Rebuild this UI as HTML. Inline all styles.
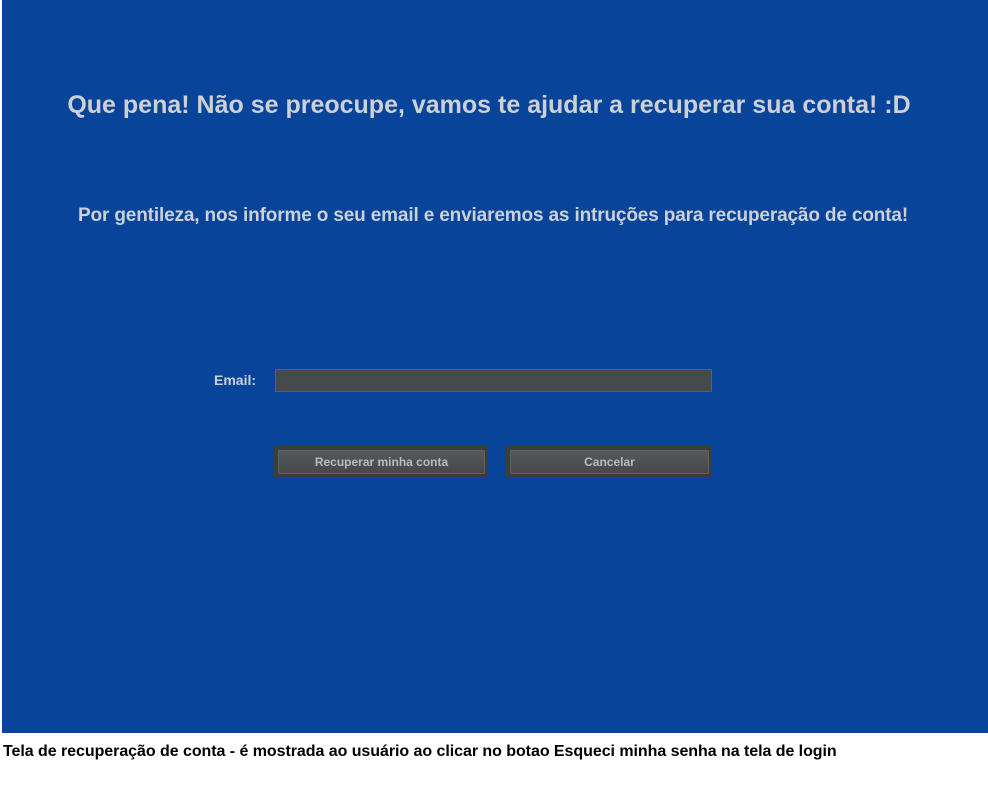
<!DOCTYPE html>
<html><head><meta charset="utf-8">
<style>
html,body{margin:0;padding:0;background:#fff;width:988px;height:794px;overflow:hidden;font-family:"Liberation Sans",sans-serif}
.panel{position:absolute;left:2px;top:0;width:986px;height:733px;background:#07449a}
.t{position:absolute;left:0;width:988px;text-align:center;color:#cdd0d6;font-weight:bold;white-space:nowrap}
#h1{left:-5px;top:91px;font-size:25px;letter-spacing:0px}
#h2{left:-1px;top:205px;font-size:19px;letter-spacing:-0.15px}
#lbl{position:absolute;left:214px;top:372px;color:#cdd0d6;font-weight:bold;font-size:14px}
#inp{position:absolute;left:275px;top:369px;width:435px;height:21px;background:#474a4c;border:1px solid #5a6066}
.btn{position:absolute;top:446px;height:32px;background:#3a3c3e}
.btn div{position:absolute;left:4px;top:4px;right:3px;bottom:4px;background:linear-gradient(#56595b,#46494b);border:1px solid #5e6264;border-radius:2px;color:#b8bcc0;font-size:12px;font-weight:bold;text-align:center;line-height:23px;box-sizing:border-box}
#cap{position:absolute;left:3px;top:743px;font-size:16px;font-weight:bold;color:#000;letter-spacing:-0.05px;white-space:nowrap}
</style></head><body>
<div class="panel"></div>
<div class="t" id="h1">Que pena! Não se preocupe, vamos te ajudar a recuperar sua conta! :D</div>
<div class="t" id="h2">Por gentileza, nos informe o seu email e enviaremos as intruções para recuperação de conta!</div>
<div id="lbl">Email:</div>
<div id="inp"></div>
<div class="btn" style="left:274px;width:214px"><div>Recuperar minha conta</div></div>
<div class="btn" style="left:506px;width:206px"><div>Cancelar</div></div>
<div id="cap">Tela de recuperação de conta - é mostrada ao usuário ao clicar no botao Esqueci minha senha na tela de login</div>
</body></html>
